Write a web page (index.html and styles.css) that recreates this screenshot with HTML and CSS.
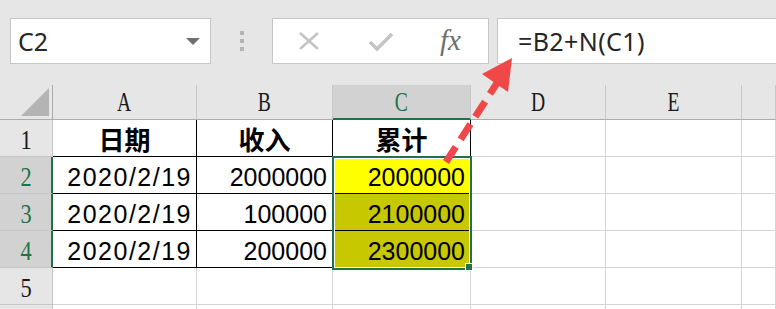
FILE: index.html
```html
<!DOCTYPE html>
<html lang="zh-CN">
<head>
    <meta charset="UTF-8">
    <title>累计</title>
    <link rel="stylesheet" href="styles.css">
</head>
<body>
    <div class="toolbar">
        <div class="namebox">
            <span>C2</span>
            <span class="caret"></span>
        </div>
        <div class="grip"><i></i><i></i><i></i></div>
        <div class="fbtns">
            <svg class="ico-x" width="24" height="20" viewBox="0 0 24 20">
                <path d="M3 2 L21 18 M21 2 L3 18" stroke="#c4c4c4" stroke-width="2.6" fill="none"/>
            </svg>
            <svg class="ico-ok" width="26" height="21" viewBox="0 0 26 21">
                <path d="M2 11 L9 18 L24 3" stroke="#c4c4c4" stroke-width="3.6" fill="none"/>
            </svg>
            <span class="fx">fx</span>
        </div>
        <div class="formula">=B2+N(C1)</div>
    </div>

    <div class="sheet">
        <div class="corner"><span class="tri"></span></div>
        <div class="col-head"><span class="lbl">A</span></div>
        <div class="col-head"><span class="lbl">B</span></div>
        <div class="col-head sel"><span class="lbl">C</span></div>
        <div class="col-head"><span class="lbl">D</span></div>
        <div class="col-head"><span class="lbl">E</span></div>
        <div class="col-head"></div>

        <div class="row-head"><span class="lbl">1</span></div>
        <div class="cell t title">日期</div>
        <div class="cell t title">收入</div>
        <div class="cell t title">累计</div>
        <div class="cell"></div>
        <div class="cell"></div>
        <div class="cell"></div>

        <div class="row-head sel"><span class="lbl">2</span></div>
        <div class="cell t date">2020/2/19</div>
        <div class="cell t">2000000</div>
        <div class="cell t yellow">2000000</div>
        <div class="cell"></div>
        <div class="cell"></div>
        <div class="cell"></div>

        <div class="row-head sel"><span class="lbl">3</span></div>
        <div class="cell t date">2020/2/19</div>
        <div class="cell t">100000</div>
        <div class="cell t olive">2100000</div>
        <div class="cell"></div>
        <div class="cell"></div>
        <div class="cell"></div>

        <div class="row-head sel"><span class="lbl">4</span></div>
        <div class="cell t date">2020/2/19</div>
        <div class="cell t">200000</div>
        <div class="cell t olive">2300000</div>
        <div class="cell"></div>
        <div class="cell"></div>
        <div class="cell"></div>

        <div class="row-head"><span class="lbl">5</span></div>
        <div class="cell"></div>
        <div class="cell"></div>
        <div class="cell"></div>
        <div class="cell"></div>
        <div class="cell"></div>
        <div class="cell"></div>

        <div class="row-head"></div>
        <div class="cell"></div>
        <div class="cell"></div>
        <div class="cell"></div>
        <div class="cell"></div>
        <div class="cell"></div>
        <div class="cell"></div>

        <div class="selection"></div>
        <div class="handle"></div>
    </div>

    <!-- red dashed arrow pointing from C2 to the formula bar -->
    <svg class="arrow" width="776" height="309" viewBox="0 0 776 309">
        <line x1="446" y1="162" x2="499" y2="80" stroke="#f04848" stroke-width="7" stroke-dasharray="18 9"/>
        <polygon points="512,58 482,74 508,92" fill="#f04848"/>
    </svg>
</body>
</html>
```

FILE: styles.css
```css
body {
    margin: 0;
    width: 776px;
    height: 309px;
    overflow: hidden;
    position: relative;
    background-color: #e6e6e6;
    font-family: "Liberation Sans", Arial, sans-serif;
}

.toolbar {
    display: flex;
    align-items: flex-start;
    height: 85px;
    padding: 18px 0 0 10px;
    box-sizing: border-box;
}

.namebox {
    display: flex;
    align-items: center;
    width: 201px;
    height: 46px;
    box-sizing: border-box;
    padding: 0 10px 0 7px;
    background-color: white;
    border: 1px solid #c6c6c6;
    font-family: "Noto Sans", sans-serif;
    font-size: 25px;
    color: #262626;
}

.caret {
    margin-left: auto;
    width: 0;
    height: 0;
    border-left: 7px solid transparent;
    border-right: 7px solid transparent;
    border-top: 7px solid #707070;
}

.grip {
    display: flex;
    flex-direction: column;
    gap: 4px;
    width: 61px;
    box-sizing: border-box;
    padding: 13px 0 0 29px;
}

.grip i {
    display: block;
    width: 4px;
    height: 4px;
    background-color: #b4b4b4;
}

.fbtns {
    display: flex;
    align-items: center;
    width: 217px;
    height: 46px;
    box-sizing: border-box;
    padding-left: 24px;
    background-color: white;
    border: 1px solid #c6c6c6;
}

.ico-x {
    margin-right: 47px;
}

.ico-ok {
    margin-right: 46px;
}

.fx {
    font-family: "Liberation Serif", serif;
    font-style: italic;
    font-size: 29px;
    color: #6e6e6e;
    margin-top: -2px;
}

.formula {
    flex: 1;
    display: flex;
    align-items: center;
    height: 46px;
    box-sizing: border-box;
    margin-left: 8px;
    padding-left: 20px;
    background-color: white;
    border: 1px solid #c6c6c6;
    border-right: none;
    font-family: "Noto Sans", sans-serif;
    font-size: 25px;
    letter-spacing: 0.4px;
    color: #262626;
}

.sheet {
    position: relative;
    display: grid;
    grid-template-columns: 53px 144px 136px 138px 135px 136px 1fr;
    grid-template-rows: 35px repeat(6, 37px);
    background-color: white;
}

.sheet > div {
    box-sizing: border-box;
}

.corner {
    position: relative;
    background-color: #e6e6e6;
    border-right: 1px solid #ababab;
    border-bottom: 1px solid #ababab;
}

.tri {
    position: absolute;
    right: 3px;
    bottom: 3px;
    width: 0;
    height: 0;
    border-left: 28px solid transparent;
    border-bottom: 28px solid #b4b4b4;
}

.lbl {
    display: inline-block;
    font-family: "Liberation Serif", serif;
    font-size: 28px;
    transform: scaleX(0.8);
    color: #1a1a1a;
}

.col-head {
    display: flex;
    align-items: center;
    justify-content: center;
    background-color: #e6e6e6;
    border-right: 1px solid #c8c8c8;
    border-bottom: 1px solid #ababab;
}

.col-head .lbl {
    font-size: 28px;
    transform: scaleX(0.7);
}

.col-head.sel {
    background-color: #d2d2d2;
    border-bottom: 2px solid #217346;
}

.row-head {
    display: flex;
    align-items: center;
    justify-content: center;
    padding-top: 3px;
    background-color: #e6e6e6;
    border-right: 1px solid #c6c6c6;
    border-bottom: 1px solid #c6c6c6;
}

.row-head.sel {
    background-color: #d2d2d2;
    border-right: 2px solid #217346;
    padding-left: 1px;
}

.sel .lbl {
    color: #217346;
}

.cell {
    display: flex;
    align-items: flex-end;
    justify-content: flex-end;
    padding: 0 5px 3px 0;
    font-size: 25px;
    line-height: 25px;
    color: black;
    border-right: 1px solid #d4d4d4;
    border-bottom: 1px solid #d4d4d4;
}

.cell.t {
    border-right-color: black;
    border-bottom-color: black;
}

.cell.date {
    letter-spacing: 1.5px;
    padding-right: 4px;
}

.cell.title {
    justify-content: center;
    padding: 0 0 4px 0;
    font-family: "Noto Sans CJK SC", sans-serif;
    font-weight: bold;
    font-size: 26px;
    line-height: 26px;
}

.yellow {
    background-color: #ffff00;
}

.olive {
    background-color: #c8c800;
}

.selection {
    position: absolute;
    left: 332px;
    top: 71px;
    width: 140px;
    height: 114px;
    box-sizing: border-box;
    border: 2px solid #217346;
    box-shadow: inset 0 0 0 1px white;
}

.handle {
    position: absolute;
    left: 465px;
    top: 178px;
    width: 8px;
    height: 8px;
    background-color: #217346;
    border: 1px solid white;
}

.arrow {
    position: absolute;
    left: 0;
    top: 0;
    pointer-events: none;
}
```
